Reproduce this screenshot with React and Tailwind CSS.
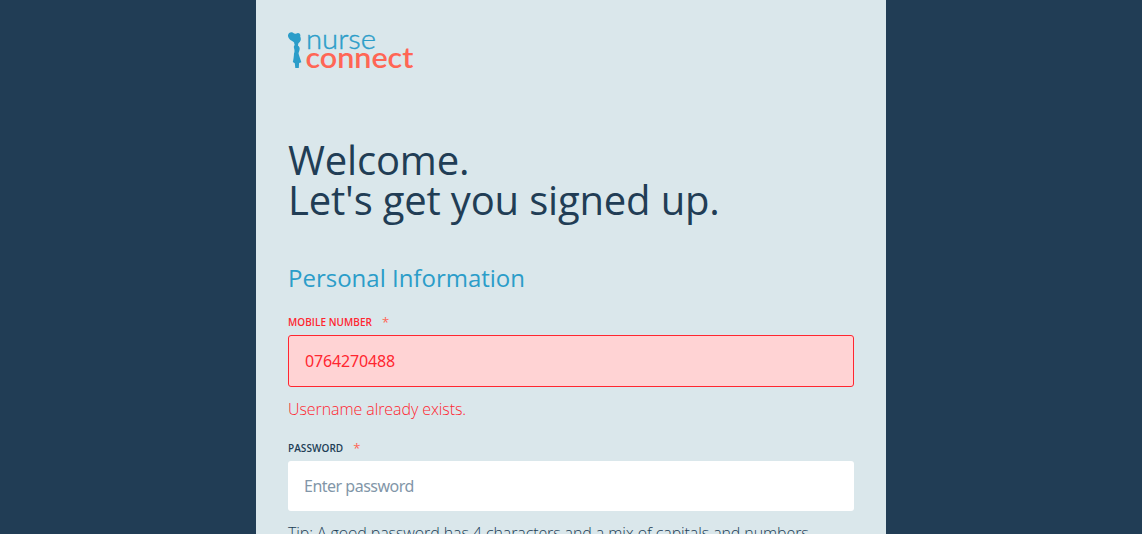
function Logo() {
  return (
    <svg className="block h-10 w-32" viewBox="0 0 128 40" role="img" aria-label="nurse connect">
      <g fill="#2b9dc9">
        <path d="M0 3.2C.4 .8 3 -.5 5 .8C6 1.6 7 2.1 8 1.7C9.2 .8 10.7 .7 11.5 1.5C12.5 2.4 12.5 3.6 12.2 4.6C13.2 6.3 13 8.8 11.5 10.3C10.2 11.6 8.2 12 6.8 10.9C5.8 9.7 4.2 9.4 2.4 8C.7 6.8-.2 4.8 0 3.2Z" />
        <path d="M5.9 10.2H10.6L9.9 13.4C11.7 14.8 12.1 16.5 11.4 18.4C11 19.7 10.5 20.6 10.6 21.7C11.4 24.5 12.7 28.3 13.4 30.3L11.1 31.1L10.8 36H7.3L6.8 31.2L4.8 30.1C5.6 27.6 5.8 24.2 6 21.5C6.8 19.6 6.5 18.3 6.2 16.8C5.7 15.1 5.7 13.6 6.7 12.9Z" />
      </g>
      <g fontFamily="Lato, sans-serif">
        <text x="18" y="16.6" fontSize="27.5" fontWeight="300" fill="#2b9dc9" stroke="#2b9dc9" strokeWidth="0.4" textLength="70" lengthAdjust="spacingAndGlyphs">nurse</text>
        <text x="17.4" y="36" fontSize="28" fontWeight="600" fill="#ff6655" textLength="108" lengthAdjust="spacingAndGlyphs">connect</text>
      </g>
    </svg>
  );
}

function FieldLabel({ htmlFor, children, error }) {
  return (
    <label htmlFor={htmlFor} className={`flex h-[26px] items-center text-[10px] font-semibold uppercase leading-[26px] tracking-[0.05px] ${error ? "text-[#ff2630]" : "text-[#213d55]"}`}>
      {children}
      <span className="ml-[10px] pb-px text-[13px] font-normal text-[#ff6655]">*</span>
    </label>
  );
}

export default function App() {
  return (
    <div className="h-screen overflow-hidden bg-[#213d55] font-['Open_Sans',sans-serif] text-[#213d55]">
      <main className="ml-64 h-full w-[630px] overflow-hidden bg-[#dae7eb] px-8 pt-8">
        <Logo />
        <h1 className="mt-17 text-[40px] leading-10 tracking-[-0.18px]">
          Welcome.
          <br />
          Let's get you signed up.
        </h1>
        <h2 className="mt-10 text-2xl leading-9 text-[#2b9dc9]">Personal Information</h2>
        <form className="mt-[13px]">
          <FieldLabel htmlFor="mobile" error>Mobile number</FieldLabel>
          <input id="mobile" defaultValue="0764270488" className="block h-[52px] w-full rounded-[3px] border border-[#ff2630] bg-[#ffd3d4] px-4 font-['Noto_Sans',sans-serif] text-base tracking-[-0.15px] text-[#ff2630] outline-none" />
          <p className="mt-[10px] text-base font-light leading-6 tracking-[-0.08px] text-[#ff2630]">Username already exists.</p>
          <div className="mt-[14px]">
            <FieldLabel htmlFor="password">Password</FieldLabel>
          </div>
          <input id="password" type="password" placeholder="Enter password" className="block h-[50px] w-full rounded-[3px] bg-white px-4 font-['Noto_Sans',sans-serif] text-base tracking-[-0.5px] outline-none placeholder:text-[#8296a8]" />
          <p className="mt-[10px] whitespace-nowrap text-base font-light leading-6 tracking-[-0.1px]">Tip: A good password has 4 characters and a mix of capitals and numbers.</p>
        </form>
      </main>
    </div>
  );
}
